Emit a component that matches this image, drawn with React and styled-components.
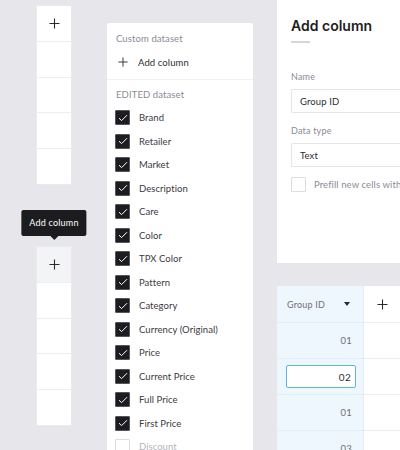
import React from "react";
import styled, { createGlobalStyle } from "styled-components";

const Global = createGlobalStyle`
  html, body { margin: 0; padding: 0; }
  body {
    background: #e6e6eb;
    font-family: Lato, "Noto Sans", sans-serif;
    overflow: hidden;
    width: 400px;
    height: 450px;
  }
`;

const Page = styled.div`
  display: flex;
  align-items: flex-start;
  width: 400px;
  height: 450px;
  overflow: hidden;
`;

const StripColumn = styled.div`
  margin-left: 36px;
  width: 36px;
  flex-shrink: 0;
  display: flex;
  flex-direction: column;
`;

const Strip = styled.div`
  position: relative;
  margin-top: ${(p) => p.$top}px;
  background: #fff;
  border: 1px solid #eaeaee;
  box-sizing: border-box;
  height: 180px;
  display: flex;
  flex-direction: column;
`;

const StripCell = styled.div`
  flex: 1;
  box-sizing: border-box;
  border-top: ${(p) => (p.$first ? "none" : "1px solid #eeeef2")};
  background: ${(p) => (p.$hover ? "#f3f4f6" : "#fff")};
  display: flex;
  align-items: center;
  justify-content: center;
  color: #2a2a30;
`;

const Tooltip = styled.div`
  position: absolute;
  left: 50%;
  bottom: calc(100% + 11px);
  transform: translateX(-50%);
  background: #1c1c1f;
  color: #fff;
  font-size: 9px;
  letter-spacing: 0.2px;
  white-space: nowrap;
  height: 26px;
  line-height: 26px;
  padding: 0 8px;
  border-radius: 2px;
  &::after {
    content: "";
    position: absolute;
    top: 100%;
    left: 50%;
    margin-left: -4px;
    border: 4px solid transparent;
    border-top-color: #1c1c1f;
  }
`;

const Plus = ({ size = 11, color = "#2a2a30" }) => (
  <svg width={size} height={size} viewBox="0 0 12 12">
    <path d="M6 0.5V11.5M0.5 6H11.5" stroke={color} strokeWidth="1.2" fill="none" />
  </svg>
);

const Panel = styled.div`
  margin-left: 35px;
  margin-top: 23px;
  width: 146px;
  background: #fff;
  border-radius: 2px 2px 0 0;
  height: 440px;
  flex-shrink: 0;
`;

const Section = styled.div`
  padding: ${(p) => p.$pad};
  border-bottom: ${(p) => (p.$divider ? "1px solid #f0f0f3" : "none")};
`;

const SectionTitle = styled.div`
  font-size: 9.5px;
  line-height: 12px;
  color: #8b8b96;
  letter-spacing: 0.1px;
  padding-left: 1px;
`;

const AddRow = styled.div`
  margin-top: 5px;
  height: 24px;
  display: flex;
  align-items: center;
  gap: 10px;
  padding-left: 3px;
  font-size: 9.5px;
  color: #2d2d33;
  letter-spacing: 0.1px;
`;

const CheckList = styled.div`
  margin-top: 5px;
  display: flex;
  flex-direction: column;
`;

const CheckRow = styled.div`
  height: 23.5px;
  display: flex;
  align-items: center;
  gap: 9px;
  font-size: 9.5px;
  letter-spacing: 0.05px;
  color: ${(p) => (p.$checked ? "#3a3a42" : "#b5b5bd")};
`;

const Box = styled.span`
  width: 15px;
  height: 15px;
  box-sizing: border-box;
  border-radius: 1px;
  flex-shrink: 0;
  display: flex;
  align-items: center;
  justify-content: center;
  background: ${(p) => (p.$checked ? "#1d1d21" : "#fff")};
  border: 1px solid ${(p) => (p.$checked ? "#55555c" : "#dcdce2")};
`;

const Check = () => (
  <svg width="10" height="8" viewBox="0 0 10 8">
    <path d="M1 4.2L3.6 6.6L9 1.2" stroke="#fff" strokeWidth="1" fill="none" />
  </svg>
);

const RightCol = styled.div`
  margin-left: 24px;
  width: 200px;
  flex-shrink: 0;
  display: flex;
  flex-direction: column;
`;

const FormPanel = styled.div`
  background: #fff;
  height: 263px;
  padding: 16px 0 0 14px;
  box-sizing: border-box;
`;

const Heading = styled.h2`
  margin: 0;
  font-family: Inter, "Liberation Sans", sans-serif;
  font-weight: 600;
  font-size: 14px;
  line-height: 20px;
  color: #1d1d22;
  letter-spacing: 0;
`;

const Rule = styled.div`
  margin-top: 5px;
  width: 19px;
  height: 2px;
  background: #d4d6dc;
`;

const Label = styled.div`
  margin-top: ${(p) => p.$top}px;
  font-size: 9px;
  line-height: 12px;
  color: #8b8b96;
  letter-spacing: 0.2px;
`;

const Field = styled.div`
  margin-top: 6px;
  height: 24px;
  box-sizing: border-box;
  border: 1px solid #e4e4ea;
  border-right: none;
  border-radius: 2px 0 0 2px;
  display: flex;
  align-items: center;
  padding-left: 8px;
  font-size: 9.5px;
  color: #2d2d33;
  letter-spacing: 0.1px;
`;

const OptionRow = styled.div`
  margin-top: 10px;
  display: flex;
  align-items: center;
  gap: 8px;
  font-size: 9.5px;
  color: #8b8b96;
  letter-spacing: 0.1px;
  white-space: nowrap;
`;

const Table = styled.div`
  margin-top: 23px;
  display: grid;
  grid-template-columns: 87px 36px;
`;

const HeadCell = styled.div`
  height: 36px;
  box-sizing: border-box;
  display: flex;
  align-items: center;
  justify-content: ${(p) => (p.$center ? "center" : "space-between")};
  padding: ${(p) => (p.$center ? "0" : "0 13px 0 10px")};
  background: ${(p) => (p.$blue ? "#eef7fd" : "#fff")};
  border-right: ${(p) => (p.$blue ? "1px solid #e2eef7" : "none")};
  font-size: 9px;
  color: #6e6e78;
  letter-spacing: 0.2px;
`;

const Cell = styled.div`
  height: 36px;
  box-sizing: border-box;
  border-top: 1px solid ${(p) => (p.$blue ? "#e2eef7" : "#ececf0")};
  border-right: ${(p) => (p.$blue ? "1px solid #e2eef7" : "none")};
  background: ${(p) => (p.$blue ? "#eef7fd" : "#fff")};
  display: flex;
  align-items: center;
  justify-content: flex-end;
  padding: 0 11px 0 9px;
  font-size: 9.5px;
  color: #6e6e78;
  letter-spacing: 0.3px;
`;

const CellInput = styled.div`
  flex: 1;
  height: 23px;
  box-sizing: border-box;
  border: 1px solid #5fb3ea;
  border-radius: 2px;
  background: #fff;
  display: flex;
  align-items: center;
  justify-content: flex-end;
  padding-right: 4px;
  margin-right: -4px;
  font-size: 10px;
  color: #2d2d33;
`;

const Caret = () => (
  <svg width="6" height="4" viewBox="0 0 6 4">
    <path d="M0 0H6L3 4Z" fill="#2a2a30" />
  </svg>
);

const items = [
  "Brand",
  "Retailer",
  "Market",
  "Description",
  "Care",
  "Color",
  "TPX Color",
  "Pattern",
  "Category",
  "Currency (Original)",
  "Price",
  "Current Price",
  "Full Price",
  "First Price",
];

const rows = ["01", "02", "01", "03"];

export default function App() {
  return (
    <>
      <Global />
      <Page>
        <StripColumn>
          <Strip $top={5}>
            {[0, 1, 2, 3, 4].map((i) => (
              <StripCell key={i} $first={i === 0}>
                {i === 0 && <Plus />}
              </StripCell>
            ))}
          </Strip>
          <Strip $top={61}>
            <Tooltip>Add column</Tooltip>
            {[0, 1, 2, 3, 4].map((i) => (
              <StripCell key={i} $first={i === 0} $hover={i === 0}>
                {i === 0 && <Plus />}
              </StripCell>
            ))}
          </Strip>
        </StripColumn>

        <Panel>
          <Section $pad="10px 9px 5px 8px" $divider>
            <SectionTitle>Custom dataset</SectionTitle>
            <AddRow>
              <Plus size={10} color="#3a3a42" />
              <span>Add column</span>
            </AddRow>
          </Section>
          <Section $pad="9px 9px 0 8px">
            <SectionTitle>EDITED dataset</SectionTitle>
            <CheckList>
              {items.map((t) => (
                <CheckRow key={t} $checked>
                  <Box $checked>
                    <Check />
                  </Box>
                  <span>{t}</span>
                </CheckRow>
              ))}
              <CheckRow>
                <Box />
                <span>Discount</span>
              </CheckRow>
            </CheckList>
          </Section>
        </Panel>

        <RightCol>
          <FormPanel>
            <Heading>Add column</Heading>
            <Rule />
            <Label $top={28}>Name</Label>
            <Field>Group ID</Field>
            <Label $top={12}>Data type</Label>
            <Field>Text</Field>
            <OptionRow>
              <Box />
              <span>Prefill new cells with</span>
            </OptionRow>
          </FormPanel>
          <Table>
            <HeadCell $blue>
              <span>Group ID</span>
              <Caret />
            </HeadCell>
            <HeadCell $center>
              <Plus />
            </HeadCell>
            {rows.map((r, i) => (
              <React.Fragment key={i}>
                <Cell $blue>
                  {i === 1 ? <CellInput>{r}</CellInput> : r}
                </Cell>
                <Cell />
              </React.Fragment>
            ))}
          </Table>
        </RightCol>
      </Page>
    </>
  );
}
